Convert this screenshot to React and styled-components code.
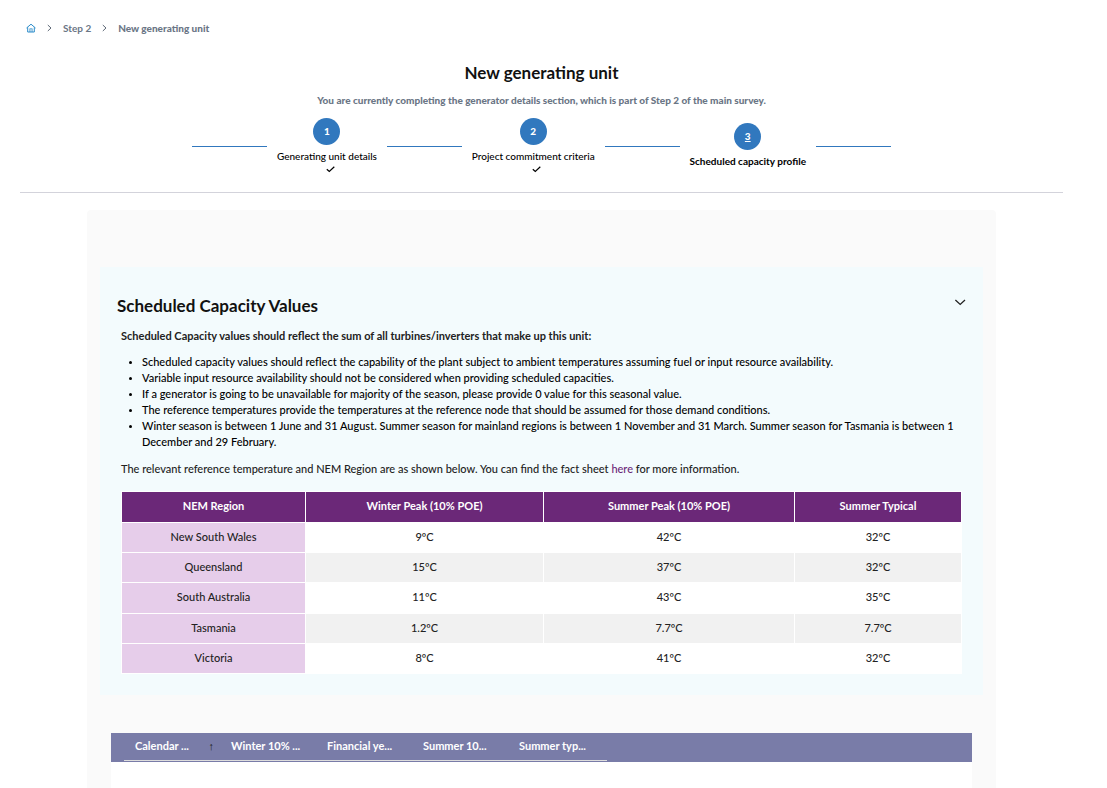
import React, { useState } from "react"
import styled, { createGlobalStyle } from "styled-components"

const GlobalStyle = createGlobalStyle`
  * {
    box-sizing: border-box;
  }

  body {
    margin: 0;
    background: #fff;
    color: #000;
    font-family: Lato, "Liberation Sans", sans-serif;
    font-size: 11px;
    line-height: 16px;
  }
`

const Page = styled.div`
  display: flex;
  flex-direction: column;
  min-height: 100vh;
  padding: 20px 44px 0 20px;
`

const Breadcrumb = styled.nav`
  display: flex;
  align-items: center;
  gap: 11px;
  height: 16px;
  padding-left: 6px;
  font-size: 10px;
  font-weight: 700;
  color: #6b7686;

  a {
    display: flex;
    color: inherit;
    text-decoration: none;
  }
`

const Current = styled.span`
  font-weight: 900;
`

const Header = styled.header`
  padding: 25px 0 18px;
  border-bottom: 1px solid #d3d3db;
  text-align: center;
`

const PageTitle = styled.h1`
  margin: 0 0 7px;
  font-size: 17px;
  line-height: 24px;
  font-weight: 700;
  color: #111;
`

const Notice = styled.p`
  margin: 0 0 10px;
  font-size: 10px;
  font-weight: 900;
  color: #6b7686;
`

const Stepper = styled.ol`
  display: flex;
  align-items: center;
  gap: 10px;
  width: 67%;
  margin: 0 auto;
  padding: 0;
  list-style: none;
`

const Line = styled.li`
  flex: 1;
  height: 1px;
  background: #3178be;
`

const Step = styled.li`
  display: flex;
  flex-direction: column;
  align-items: center;
  font-size: 10px;
  font-weight: ${(props) => (props.$active ? 700 : 500)};
`

const StepNumber = styled.a`
  width: 27px;
  height: 27px;
  margin-bottom: 3px;
  border-radius: 50%;
  background: #3178be;
  color: #fff;
  font-weight: 900;
  line-height: 27px;
  text-decoration: ${(props) => (props.$active ? "underline" : "none")};
`

const StepDone = styled.span`
  display: flex;
  height: 10px;
  padding-left: 7px;
`

const Card = styled.main`
  display: flex;
  flex: 1;
  flex-direction: column;
  margin: 17px 67px 0;
  padding: 57px 13px 0;
  border-radius: 4px 4px 0 0;
  background: #fafafa;
`

const Panel = styled.section`
  padding: 27px 21px 21px;
  background: #f3fbfd;
`

const PanelToggle = styled.button`
  display: flex;
  justify-content: space-between;
  width: 100%;
  margin-bottom: 10px;
  padding: 0;
  border: 0;
  background: none;
  color: #111;
  font: inherit;
  text-align: left;
  cursor: pointer;

  svg {
    margin-right: -4px;
  }
`

const PanelTitle = styled.h2`
  margin: 0 -4px;
  font-size: 17px;
  line-height: 24px;
  font-weight: 700;
`

const Lead = styled.p`
  margin: 0 0 10px;
  font-weight: 700;
  color: #222;
`

const Notes = styled.ul`
  margin: 0 0 11px;
  padding-left: 21px;
  font-weight: 500;

  li::marker {
    font-size: 9px;
  }
`

const Reference = styled.p`
  margin: 0 0 14px;
  font-weight: 500;
  color: #222;

  a {
    color: #6b2878;
    text-decoration: none;
  }
`

const RegionTable = styled.table`
  width: 100%;
  border-collapse: collapse;
  table-layout: fixed;
  color: #222;
  text-align: center;

  th,
  td {
    height: 30px;
    padding: 0 0 2px;
    border: 1px solid #fff;
    background: #fff;
    font-weight: 500;
  }

  thead th {
    height: 31px;
    background: #6b2878;
    color: #fff;
    font-weight: 700;
  }

  tbody th {
    background: #e6cdea;
  }

  tbody tr:nth-child(even) td {
    background: #f1f1f1;
  }

  tbody tr:nth-child(3) > * {
    height: 31px;
  }
`

const Grid = styled.div`
  flex: 1;
  min-height: 55px;
  margin: 38px 11px 0;
  background: #fff;
`

const GridHead = styled.div`
  height: 29px;
  padding: 0 13px;
  background: #797ca8;
`

const GridTable = styled.table`
  width: 483px;
  height: 28px;
  border-collapse: collapse;
  border-bottom: 1px solid #ddd;
  table-layout: fixed;
  color: #fff;
  text-align: left;

  th {
    width: 96px;
    padding: 0 0 1px 11px;
    font-weight: 700;
    white-space: nowrap;
  }

  th:last-child {
    width: auto;
  }
`

const SortButton = styled.button`
  display: flex;
  justify-content: space-between;
  width: 100%;
  padding: 0 6px 0 0;
  border: 0;
  background: none;
  color: inherit;
  font: inherit;
  cursor: pointer;
`

const SortArrow = styled.span`
  font-weight: 400;
  font-family: "Liberation Sans", sans-serif;
  color: #222;
`

const steps = ["Generating unit details", "Project commitment criteria", "Scheduled capacity profile"]

const regions = [
  ["New South Wales", "9ºC", "42ºC", "32ºC"],
  ["Queensland", "15ºC", "37ºC", "32ºC"],
  ["South Australia", "11ºC", "43ºC", "35ºC"],
  ["Tasmania", "1.2ºC", "7.7ºC", "7.7ºC"],
  ["Victoria", "8ºC", "41ºC", "32ºC"],
]

const columns = ["Winter 10% ...", "Financial ye...", "Summer 10...", "Summer typ..."]

function HomeIcon() {
  return (
    <svg width="10" height="10" viewBox="0 0 10 10" fill="none" stroke="#2a8bc9">
      <path d="M.5 5 5 1.200l4.500 3.800M1.700 4.300V9h6.600V4.300" />
      <path d="M3.700 9V5.700h2.600V9M5 5.700V9" strokeWidth=".6" />
    </svg>
  )
}

function Separator() {
  return (
    <svg width="5" height="8" viewBox="0 0 5 8" fill="none" stroke="#5d6876" aria-hidden="true">
      <path d="M.8 1l3.200 3L.8 7" />
    </svg>
  )
}

export default function App() {
  const [open, setOpen] = useState(true)

  return (
    <>
      <GlobalStyle />
      <Page>
        <Breadcrumb aria-label="Breadcrumb">
          <a href="#home" aria-label="Home">
            <HomeIcon />
          </a>
          <Separator />
          <a href="#step-2">Step 2</a>
          <Separator />
          <Current aria-current="page">New generating unit</Current>
        </Breadcrumb>

        <Header>
          <PageTitle>New generating unit</PageTitle>
          <Notice>
            You are currently completing the generator details section, which is part of Step 2 of the main survey.
          </Notice>
          <Stepper>
            <Line aria-hidden="true" />
            {steps.map((label, i) => {
              const active = i === steps.length - 1
              return (
                <React.Fragment key={label}>
                  <Step $active={active}>
                    <StepNumber href={`#unit-${i + 1}`} $active={active}>
                      {i + 1}
                    </StepNumber>
                    {label}
                    {!active && (
                      <StepDone>
                        <svg width="9" height="10" viewBox="0 0 9 10" fill="none" stroke="#000" strokeWidth="1.200">
                          <path d="M.8 5.200l2.500 2.300L8.300 2.800" />
                        </svg>
                      </StepDone>
                    )}
                  </Step>
                  <Line aria-hidden="true" />
                </React.Fragment>
              )
            })}
          </Stepper>
        </Header>

        <Card>
          <Panel>
            <PanelToggle aria-expanded={open} onClick={() => setOpen(!open)}>
              <PanelTitle>Scheduled Capacity Values</PanelTitle>
              <svg width="16" height="16" viewBox="0 0 16 16" fill="none" stroke="#222" strokeWidth="1.300">
                <path d="M5.400 6l4.800 4.400L15 6" />
              </svg>
            </PanelToggle>
            {open && (
              <>
                <Lead>
                  Scheduled Capacity values should reflect the sum of all turbines/inverters that make up this unit:
                </Lead>
                <Notes>
                  <li>
                    Scheduled capacity values should reflect the capability of the plant subject to ambient
                    temperatures assuming fuel or input resource availability.
                  </li>
                  <li>
                    Variable input resource availability should not be considered when providing scheduled capacities.
                  </li>
                  <li>
                    If a generator is going to be unavailable for majority of the season, please provide 0 value for
                    this seasonal value.
                  </li>
                  <li>
                    The reference temperatures provide the temperatures at the reference node that should be assumed
                    for those demand conditions.
                  </li>
                  <li>
                    Winter season is between 1 June and 31 August. Summer season for mainland regions is between 1
                    November and 31 March. Summer season for Tasmania is between 1 December and 29 February.
                  </li>
                </Notes>
                <Reference>
                  The relevant reference temperature and NEM Region are as shown below. You can find the fact sheet{" "}
                  <a href="#fact-sheet">here</a> for more information.
                </Reference>
                <RegionTable>
                  <colgroup>
                    <col width="184" />
                    <col width="238" />
                    <col width="251" />
                    <col width="167" />
                  </colgroup>
                  <thead>
                    <tr>
                      <th scope="col">NEM Region</th>
                      <th scope="col">Winter Peak (10% POE)</th>
                      <th scope="col">Summer Peak (10% POE)</th>
                      <th scope="col">Summer Typical</th>
                    </tr>
                  </thead>
                  <tbody>
                    {regions.map(([name, ...values]) => (
                      <tr key={name}>
                        <th scope="row">{name}</th>
                        {values.map((value, i) => (
                          <td key={i}>{value}</td>
                        ))}
                      </tr>
                    ))}
                  </tbody>
                </RegionTable>
              </>
            )}
          </Panel>

          <Grid>
            <GridHead>
              <GridTable>
                <thead>
                  <tr>
                    <th scope="col" aria-sort="ascending">
                      <SortButton>
                        Calendar ...<SortArrow>↑</SortArrow>
                      </SortButton>
                    </th>
                    {columns.map((column) => (
                      <th scope="col" key={column}>
                        {column}
                      </th>
                    ))}
                  </tr>
                </thead>
              </GridTable>
            </GridHead>
          </Grid>
        </Card>
      </Page>
    </>
  )
}
